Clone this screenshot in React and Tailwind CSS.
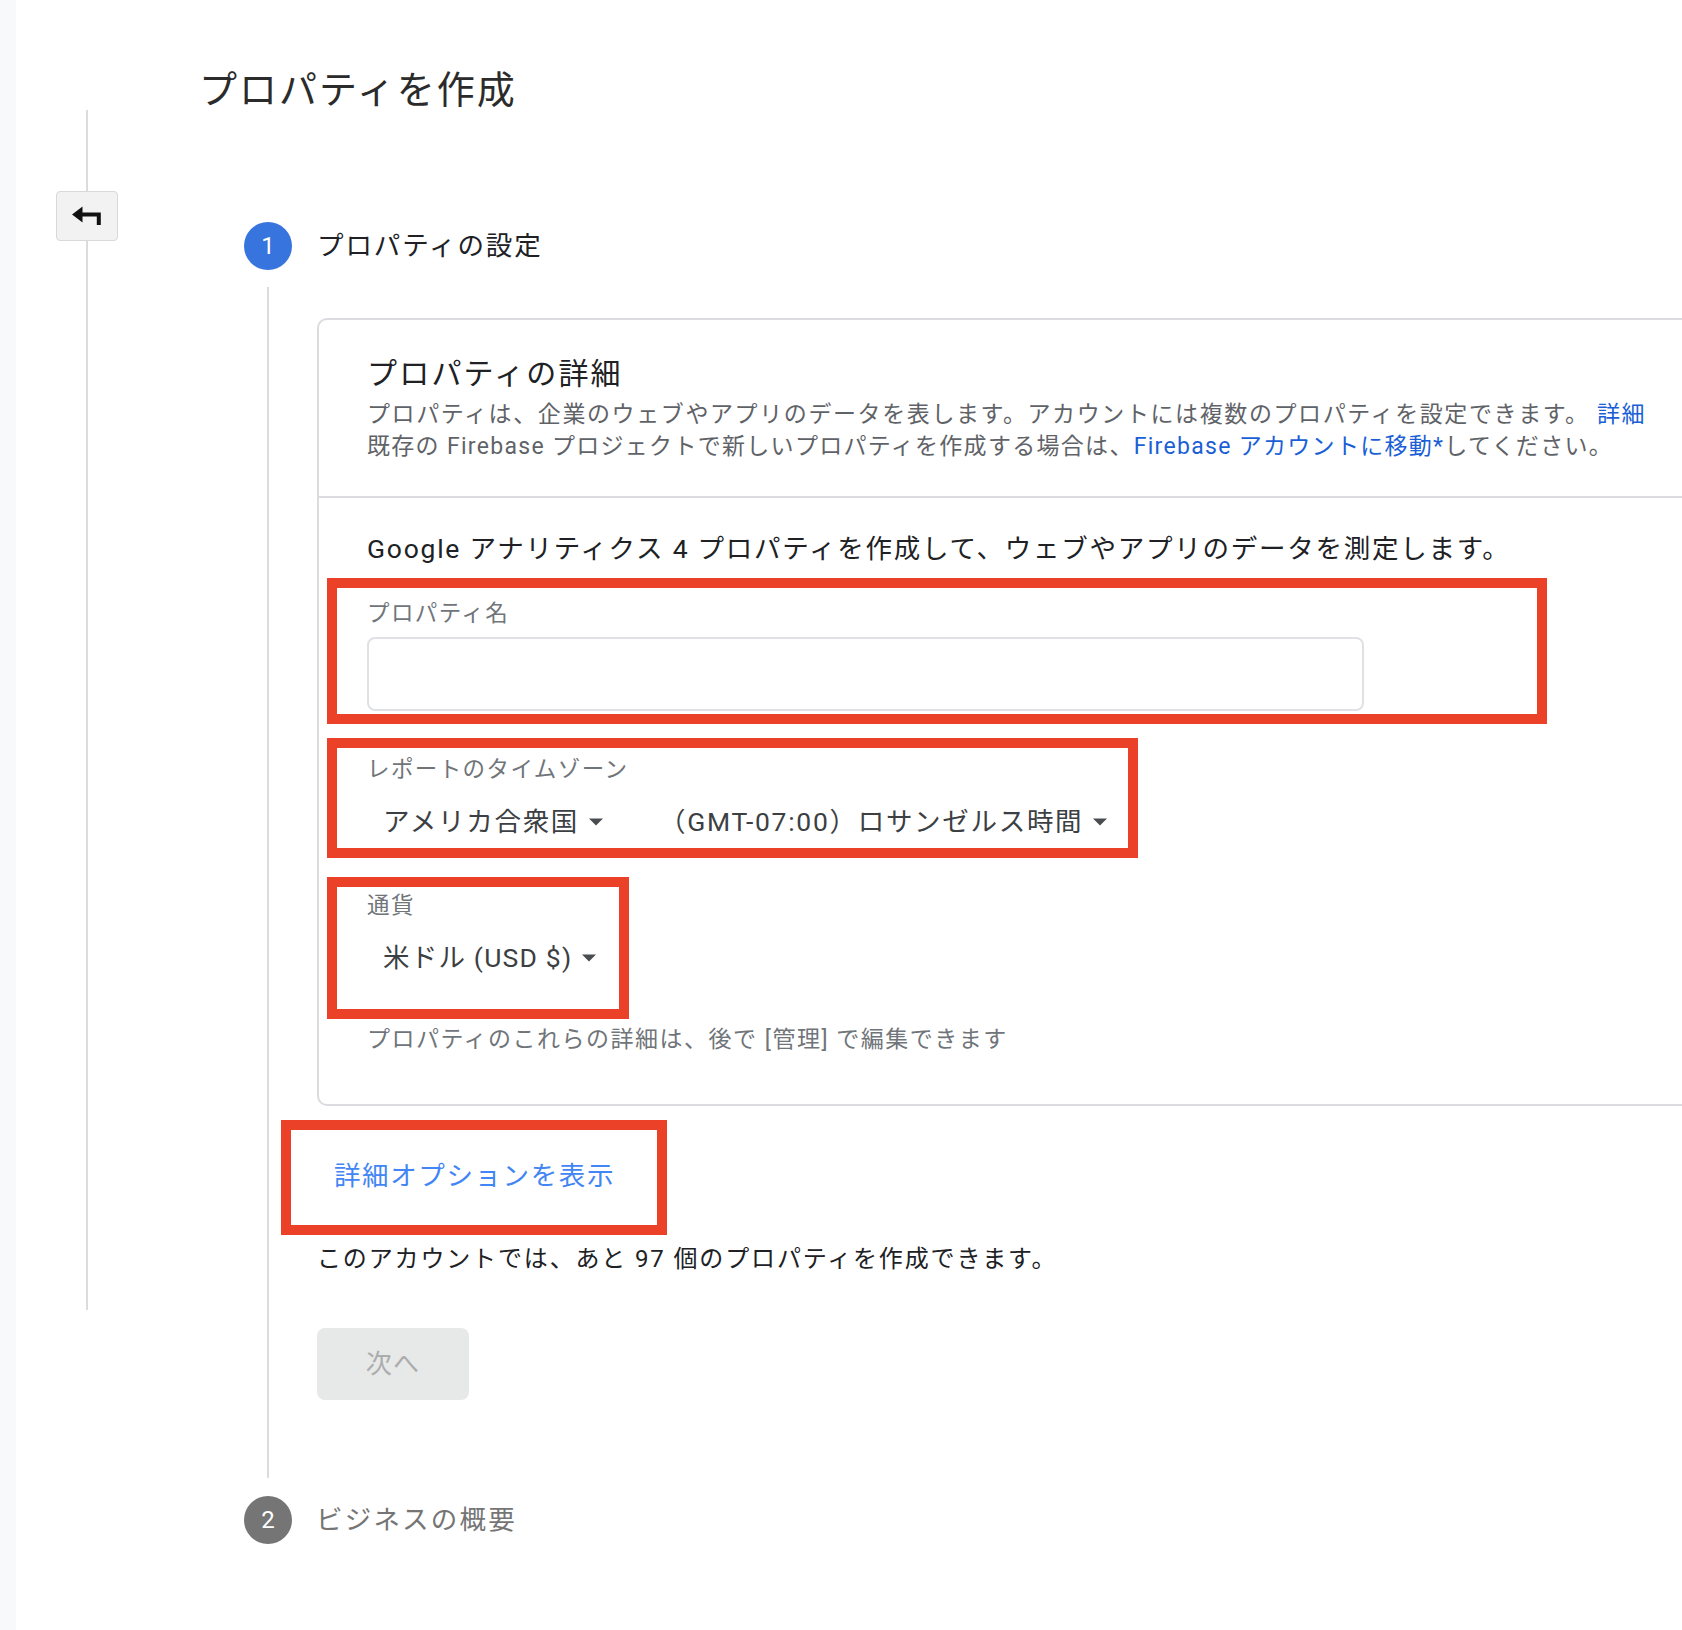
import React from "react";

const red = "border-[10px] border-[#ea4128]";

function Caret() {
    return (
        <svg width="14" height="8" viewBox="0 0 14 8" className="shrink-0">
            <path d="M0 0.5h14L7 7.5z" fill="#494c50" />
        </svg>
    );
}

function BackIcon() {
    return (
        <svg width="30" height="20" viewBox="0 0 30 20">
            <path d="M0 8.5L10.5 0.5V16.5Z" fill="#111" />
            <path d="M9 8.5H26.8V19" fill="none" stroke="#111" strokeWidth="4" />
        </svg>
    );
}

export default function App() {
    return (
        <div className="flex w-full h-[1630px] overflow-hidden bg-white font-[family-name:Roboto,'Noto_Sans_CJK_JP',sans-serif]">
            {/* left grey strip */}
            <div className="w-[16px] shrink-0 bg-[#f8f9fa]" />

            {/* back rail */}
            <div className="w-[141px] shrink-0 flex flex-col items-center pt-[110px]">
                <div className="w-[2px] h-[81px] bg-[#dadce0]" />
                <button className="w-[62px] h-[50px] rounded-[4px] border border-[#d9d9d9] bg-[#f2f2f2] flex items-center justify-center">
                    <BackIcon />
                </button>
                <div className="w-[2px] h-[1069px] bg-[#dadce0]" />
            </div>

            {/* main */}
            <div className="flex-1 min-w-0 pt-[66px]">
                <h1 className="ml-[42px] text-[38px] leading-[48px] tracking-[2px] text-[#2b2b2b] font-normal">
                    プロパティを作成
                </h1>

                <div className="ml-[87px] mt-[108px]">
                    {/* step 1 */}
                    <div className="flex items-center h-[48px]">
                        <div className="w-[48px] h-[48px] rounded-full bg-[#3874de] text-white text-[24px] flex items-center justify-center">
                            1
                        </div>
                        <span className="ml-[25px] text-[26.5px] tracking-[1.9px] text-[#202124]">プロパティの設定</span>
                    </div>

                    <div className="flex mt-[17px]">
                        <div className="w-[48px] shrink-0 flex justify-center">
                            <div className="w-[2px] bg-[#dadce0]" />
                        </div>

                        <div className="ml-[25px] pt-[31px] pb-[78px]">
                            {/* card */}
                            <div className="w-[1500px] border-2 border-[#dadce0] rounded-[10px]">
                                <div className="px-[48px] pt-[34px] pb-[33px] border-b-2 border-[#dadce0]">
                                    <h2 className="text-[30px] leading-[40px] tracking-[2.2px] text-[#202124] font-normal">
                                        プロパティの詳細
                                    </h2>
                                    <p className="mt-[5px] text-[23px] leading-[32px] tracking-[1.6px] text-[#5f6368] whitespace-nowrap">
                                        プロパティは、企業のウェブやアプリのデータを表します。アカウントには複数のプロパティを設定できます。{" "}
                                        <a className="text-[#1a5fd6]">詳細</a>
                                        <br />
                                        <span className="tracking-[1.3px]">
                                            既存の Firebase プロジェクトで新しいプロパティを作成する場合は、
                                            <a className="text-[#1a5fd6]">Firebase アカウントに移動*</a>
                                            してください。
                                        </span>
                                    </p>
                                </div>

                                <div className="pl-[48px] pt-[33px] pb-[48px]">
                                    <p className="text-[26.5px] leading-[36px] tracking-[1.75px] text-[#202124]">
                                        Google アナリティクス 4 プロパティを作成して、ウェブやアプリのデータを測定します。
                                    </p>

                                    <div className={`mt-[11px] -ml-[40px] w-[1220px] ${red} pl-[30px] pt-[9px] pb-[3px]`}>
                                        <div className="text-[22.5px] leading-[32px] tracking-[1.4px] text-[#70757a]">プロパティ名</div>
                                        <input
                                            type="text"
                                            className="mt-[8px] block w-[997px] h-[74px] border-2 border-[#dfe1e5] rounded-[8px] outline-none px-4"
                                        />
                                    </div>

                                    <div className={`mt-[14px] -ml-[40px] w-[811px] ${red} pl-[30px] pt-[5px] pb-[8px]`}>
                                        <div className="text-[22.5px] leading-[32px] tracking-[1.4px] text-[#70757a]">
                                            レポートのタイムゾーン
                                        </div>
                                        <div className="mt-[19px] flex items-center h-[36px] text-[26.5px] tracking-[1.7px] text-[#3c4043]">
                                            <span className="pl-[16px]">アメリカ合衆国</span>
                                            <span className="ml-[10px]"><Caret /></span>
                                            <span className="ml-[56px]">（GMT-07:00）ロサンゼルス時間</span>
                                            <span className="ml-[10px]"><Caret /></span>
                                        </div>
                                    </div>

                                    <div className={`mt-[19px] -ml-[40px] w-[302px] ${red} pl-[30px] pt-[2px] pb-[33px]`}>
                                        <div className="text-[22.5px] leading-[32px] tracking-[1.4px] text-[#70757a]">通貨</div>
                                        <div className="mt-[19px] flex items-center h-[36px] text-[26.5px] tracking-[1.2px] text-[#3c4043]">
                                            <span className="pl-[16px]">米ドル (USD $)</span>
                                            <span className="ml-[10px]"><Caret /></span>
                                        </div>
                                    </div>

                                    <p className="mt-[5px] text-[23px] leading-[32px] tracking-[1.5px] text-[#70757a]">
                                        プロパティのこれらの詳細は、後で [管理] で編集できます
                                    </p>
                                </div>
                            </div>

                            {/* advanced options */}
                            <div className={`mt-[14px] -ml-[36px] w-[386px] ${red} pl-[43px] pt-[28px] pb-[31px]`}>
                                <button className="text-[26.5px] leading-[36px] tracking-[1.6px] text-[#4285f4]">
                                    詳細オプションを表示
                                </button>
                            </div>

                            <p className="mt-[6px] text-[24px] leading-[36px] tracking-[1.85px] text-[#202124]">
                                このアカウントでは、あと 97 個のプロパティを作成できます。
                            </p>

                            <button className="mt-[51px] w-[152px] h-[72px] rounded-[8px] bg-[#e7e8e8] text-[26px] tracking-[1.3px] text-[#acacac] flex items-center justify-center">
                                次へ
                            </button>
                        </div>
                    </div>

                    {/* step 2 */}
                    <div className="flex items-center h-[48px] mt-[18px]">
                        <div className="w-[48px] h-[48px] rounded-full bg-[#757575] text-white text-[24px] flex items-center justify-center">
                            2
                        </div>
                        <span className="ml-[24px] text-[26.5px] tracking-[2.2px] text-[#757575]">ビジネスの概要</span>
                    </div>
                </div>
            </div>
        </div>
    );
}
